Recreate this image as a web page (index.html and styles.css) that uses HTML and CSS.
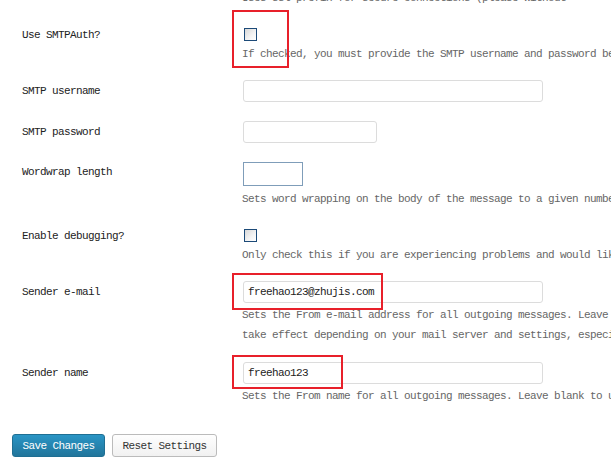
FILE: index.html
```html
<!DOCTYPE html>
<html>
<head>
<meta charset="utf-8">
<link rel="stylesheet" href="styles.css">
</head>
<body>
<div class="page">
  <div class="row top-row">
    <div class="label"></div>
    <div class="field"><p class="desc">Uses ssl prefix for secure connections (please without</p></div>
  </div>

  <div class="row r-auth">
    <div class="label lp0">Use SMTPAuth?</div>
    <div class="field">
      <input type="checkbox" class="check">
      <p class="desc d-check">If checked, you must provide the SMTP username and password below</p>
      <span class="mark mark-auth"></span>
    </div>
  </div>

  <div class="row r-user">
    <div class="label lp4">SMTP username</div>
    <div class="field"><input type="text" class="text wide"></div>
  </div>

  <div class="row r-pass">
    <div class="label lp4">SMTP password</div>
    <div class="field"><input type="password" class="text mid"></div>
  </div>

  <div class="row r-wrap">
    <div class="label lp3">Wordwrap length</div>
    <div class="field">
      <input type="text" class="text small">
      <p class="desc d-wrap">Sets word wrapping on the body of the message to a given number of characters</p>
    </div>
  </div>

  <div class="row r-debug">
    <div class="label lp0">Enable debugging?</div>
    <div class="field">
      <input type="checkbox" class="check">
      <p class="desc d-check">Only check this if you are experiencing problems and would like more information</p>
    </div>
  </div>

  <div class="row r-email">
    <div class="label lp4">Sender e-mail</div>
    <div class="field">
      <input type="text" class="text wide" value="freehao123@zhujis.com">
      <p class="desc d-input">Sets the From e-mail address for all outgoing messages. Leave blank to use the default<br>take effect depending on your mail server and settings, especially if using SMTPAuth</p>
      <span class="mark mark-email"></span>
    </div>
  </div>

  <div class="row r-name">
    <div class="label lp4">Sender name</div>
    <div class="field">
      <input type="text" class="text wide" value="freehao123">
      <p class="desc d-input">Sets the From name for all outgoing messages. Leave blank to use the default</p>
      <span class="mark mark-name"></span>
    </div>
  </div>

  <div class="buttons">
    <button class="btn primary">Save Changes</button>
    <button class="btn secondary">Reset Settings</button>
  </div>
</div>
</body>
</html>
```
FILE: styles.css
```css
html, body {
  margin: 0;
  padding: 0;
  background: #fff;
  overflow: hidden;
}
body {
  width: 611px;
  height: 469px;
  font-family: "Liberation Mono", "DejaVu Sans Mono", monospace;
  font-size: 11px;
  letter-spacing: -0.6px;
  color: #222;
}
.page {
  padding-left: 22px;
}
.row {
  display: grid;
  grid-template-columns: 221px 1fr;
  align-items: start;
}
.label {
  line-height: 14px;
  white-space: nowrap;
}
.lp0 { padding-top: 0; }
.lp3 { padding-top: 3px; }
.lp4 { padding-top: 4px; }
.field {
  position: relative;
  min-width: 0;
}
.desc {
  margin: 0 0 0 -1px;
  color: #666;
  line-height: 20px;
  white-space: nowrap;
}
.top-row { margin-top: -12px; height: 20px; }
.d-check { margin-top: 3px; }
.d-wrap { margin-top: 3px; }
.d-input { margin-top: 2px; }

.r-auth { margin-top: 20px; }
.r-user { margin-top: 16px; }
.r-pass { margin-top: 19px; }
.r-wrap { margin-top: 19px; }
.r-debug { margin-top: 20px; }
.r-email { margin-top: 16px; }
.r-name { margin-top: 17px; }

.check {
  -webkit-appearance: none;
  appearance: none;
  display: block;
  margin: 0 0 0 1px;
  width: 13px;
  height: 13px;
  box-sizing: border-box;
  border: 1px solid #1c4a78;
  background: linear-gradient(135deg, #d8d8d8 0%, #f4f4f4 60%, #ffffff 100%);
}
.text {
  display: block;
  margin: 0;
  box-sizing: border-box;
  height: 22px;
  border: 1px solid #dcdcdc;
  border-radius: 3px;
  background: #fff;
  padding: 0 4px;
  font-family: "Liberation Mono", "DejaVu Sans Mono", monospace;
  font-size: 11px;
  letter-spacing: -0.6px;
  color: #222;
  outline: none;
}
.wide { width: 300px; }
.mid { width: 134px; }
.small {
  width: 60px;
  height: 24px;
  border: 1px solid #7f9db9;
  border-radius: 0;
}

.mark {
  position: absolute;
  border: 2px solid #e8202a;
  box-sizing: border-box;
  pointer-events: none;
}
.mark-auth { left: -11px; top: -18px; width: 57px; height: 58px; }
.mark-email { left: -11px; top: -8px; width: 151px; height: 37px; }
.mark-name { left: -11px; top: -7px; width: 111px; height: 34px; }

.buttons {
  display: flex;
  gap: 7px;
  margin-top: 28px;
  margin-left: -10px;
}
.btn {
  height: 23px;
  box-sizing: border-box;
  border-radius: 3px;
  padding: 0;
  font-family: "Liberation Mono", "DejaVu Sans Mono", monospace;
  font-size: 11px;
  letter-spacing: -0.6px;
  cursor: pointer;
}
.primary {
  width: 93px;
  color: #fff;
  border: 1px solid #1f6f93;
  background: linear-gradient(to bottom, #2a95c5 0%, #21759b 100%);
}
.secondary {
  width: 105px;
  color: #333;
  border: 1px solid #bbb;
  background: linear-gradient(to bottom, #fefefe 0%, #f1f1f1 100%);
}
```
